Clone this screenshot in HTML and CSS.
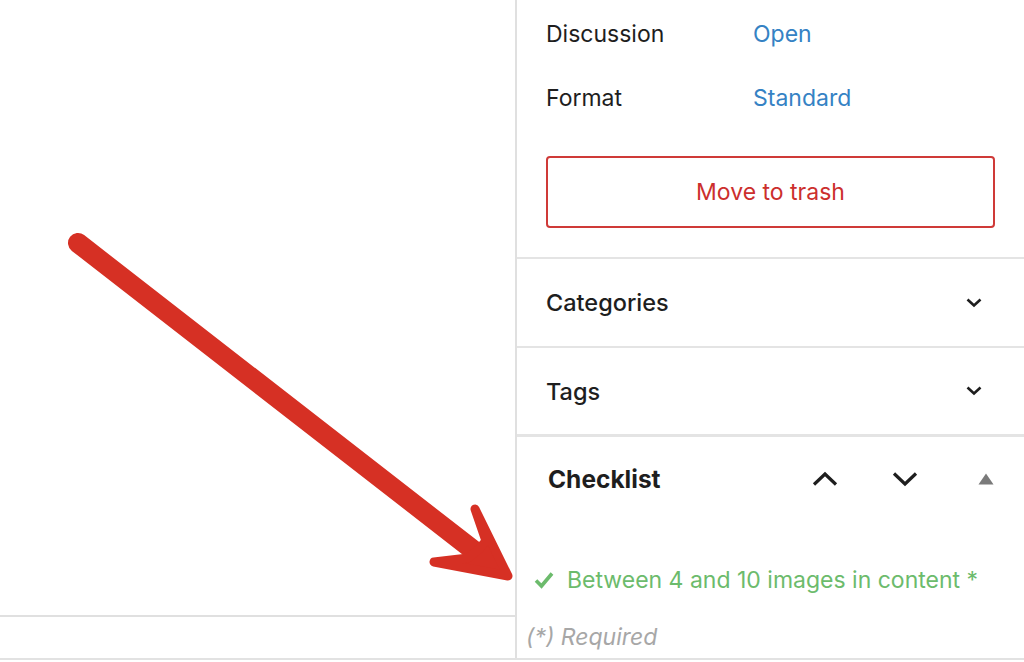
FILE: index.html
```html
<!DOCTYPE html>
<html>
<head>
<meta charset="utf-8">
<link rel="stylesheet" href="styles.css">
</head>
<body>
<div class="page">
  <div class="main">
    <div class="canvas"></div>
    <div class="footer-strip"></div>
  </div>
  <aside class="sidebar">
    <div class="panel summary">
      <div class="row"><span class="label">Discussion</span><a class="value">Open</a></div>
      <div class="row"><span class="label">Format</span><a class="value">Standard</a></div>
      <button class="trash">Move to trash</button>
    </div>
    <div class="panel collapsed">
      <span class="title">Categories</span>
      <svg class="chev" viewBox="0 0 24 24" width="24" height="24"><path d="M5.5 8.5 12 14.5 18.5 8.5" fill="none" stroke="#1e1e1e" stroke-width="2.6"/></svg>
    </div>
    <div class="panel collapsed last">
      <span class="title">Tags</span>
      <svg class="chev" viewBox="0 0 24 24" width="24" height="24"><path d="M5.5 8.5 12 14.5 18.5 8.5" fill="none" stroke="#1e1e1e" stroke-width="2.6"/></svg>
    </div>
    <div class="panel checklist">
      <div class="ck-head">
        <span class="ck-title">Checklist</span>
        <div class="ck-tools">
          <svg class="tool" viewBox="0 0 26 16" width="26" height="16"><path d="M2 13.5 13 3 24 13.5" fill="none" stroke="#1e1e1e" stroke-width="3.2"/></svg>
          <svg class="tool" viewBox="0 0 26 16" width="26" height="16"><path d="M2 2.5 13 13 24 2.5" fill="none" stroke="#1e1e1e" stroke-width="3.2"/></svg>
          <svg class="tool tri" viewBox="0 0 16 12" width="16" height="12"><path d="M8 0.5 15.5 11.5 0.5 11.5Z" fill="#7a7a7a"/></svg>
        </div>
      </div>
      <div class="ck-item">
        <svg class="tick" viewBox="0 0 20 18" width="20" height="18"><path d="M2 9.5 7.5 15 18 2.5" fill="none" stroke="#6cbb6c" stroke-width="3.6"/></svg>
        <span>Between 4 and 10 images in content *</span>
      </div>
      <div class="ck-note">(*) Required</div>
    </div>
  </aside>
</div>
<svg class="arrow" viewBox="0 0 1024 662" width="1024" height="662">
  <line x1="78" y1="243" x2="495" y2="567" stroke="#d63024" stroke-width="20" stroke-linecap="round"/>
  <path d="M475 509 L508 576 L434 562 L468 558 L478 550 L486 541 Z" fill="#d63024" stroke="#d63024" stroke-width="9" stroke-linejoin="round"/>
</svg>
</body>
</html>
```
FILE: styles.css
```css
* { box-sizing: border-box; }
html, body { margin: 0; padding: 0; }
body {
  width: 1024px;
  height: 662px;
  overflow: hidden;
  background: #fff;
  font-family: Inter, "Noto Sans", "Liberation Sans", sans-serif;
  color: #1e1e1e;
  position: relative;
}
.page {
  display: flex;
  height: 660px;
  border-bottom: 2px solid #e2e2e2;
}
.main {
  width: 516px;
  display: flex;
  flex-direction: column;
}
.canvas {
  height: 617px;
  border-bottom: 2px solid #e0e0e0;
}
.footer-strip { flex: 1; }
.sidebar {
  flex: 1;
  border-left: 2px solid #e0e0e0;
  display: flex;
  flex-direction: column;
}
.panel {
  border-bottom: 2px solid #e4e4e4;
}
.summary {
  padding: 14px 29px 29px 29px;
}
.row {
  display: flex;
  align-items: center;
  height: 40px;
  margin-bottom: 24px;
  font-size: 23px;
}
.label { width: 207px; color: #1e1e1e; }
.value { color: #3582c4; }
.trash {
  display: block;
  width: 449px;
  height: 72px;
  margin-top: 38px;
  border: 2px solid #cf3a38;
  border-radius: 4px;
  background: #fff;
  color: #cc2f2d;
  font-family: inherit;
  font-size: 23px;
}
.collapsed {
  height: 89px;
  display: flex;
  align-items: center;
  justify-content: space-between;
  padding: 0 38px 0 29px;
  font-size: 23.5px;
  font-weight: 500;
}
.collapsed.last { border-bottom-width: 3px; }
.chev { display: block; }
.checklist {
  flex: 1;
  border-bottom: none;
  padding: 0;
}
.ck-head {
  height: 84px;
  display: flex;
  align-items: center;
  justify-content: space-between;
  padding: 0 30px 0 31px;
}
.ck-title { font-size: 24.5px; font-weight: 700; }
.ck-tools { display: flex; align-items: center; gap: 54px; }
.tri { margin-left: 6px; }
.ck-item {
  margin-top: 44px;
  height: 30px;
  display: flex;
  align-items: center;
  gap: 13px;
  padding-left: 17px;
  color: #6cbb6c;
  font-size: 23px;
}
.tick { display: block; }
.ck-note {
  margin-top: 27px;
  height: 30px;
  line-height: 30px;
  padding-left: 9px;
  font-size: 23px;
  font-style: italic;
  color: #a7a7a7;
}
.arrow {
  position: absolute;
  left: 0;
  top: 0;
  pointer-events: none;
}
```
